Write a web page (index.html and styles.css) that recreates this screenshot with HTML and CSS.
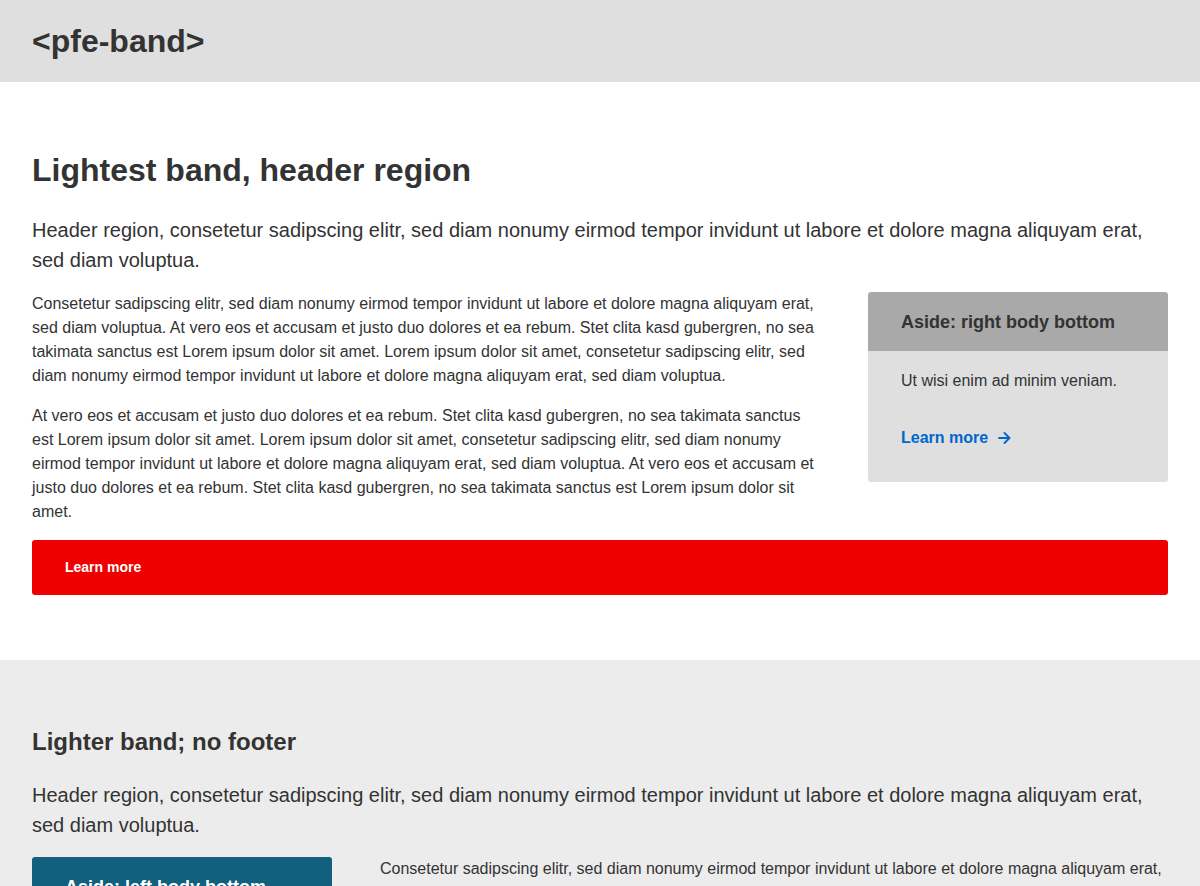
FILE: index.html
```html
<!DOCTYPE html>
<html lang="en">
<head>
<meta charset="utf-8">
<title>pfe-band</title>
<link rel="stylesheet" href="styles.css">
</head>
<body>
<header class="page-header">
  <h1 class="page-title">&lt;pfe-band&gt;</h1>
</header>

<section class="band band-lightest">
  <div class="band-header">
    <h2 class="band-title">Lightest band, header region</h2>
    <p class="band-lead">Header region, consetetur sadipscing elitr, sed diam nonumy eirmod tempor invidunt ut labore et dolore magna aliquyam erat, sed diam voluptua.</p>
  </div>
  <div class="band-content aside-right">
    <div class="band-body">
      <p>Consetetur sadipscing elitr, sed diam nonumy eirmod tempor invidunt ut labore et dolore magna aliquyam erat, sed diam voluptua. At vero eos et accusam et justo duo dolores et ea rebum. Stet clita kasd gubergren, no sea takimata sanctus est Lorem ipsum dolor sit amet. Lorem ipsum dolor sit amet, consetetur sadipscing elitr, sed diam nonumy eirmod tempor invidunt ut labore et dolore magna aliquyam erat, sed diam voluptua.</p>
      <p>At vero eos et accusam et justo duo dolores et ea rebum. Stet clita kasd gubergren, no sea takimata sanctus est Lorem ipsum dolor sit amet. Lorem ipsum dolor sit amet, consetetur sadipscing elitr, sed diam nonumy eirmod tempor invidunt ut labore et dolore magna aliquyam erat, sed diam voluptua. At vero eos et accusam et justo duo dolores et ea rebum. Stet clita kasd gubergren, no sea takimata sanctus est Lorem ipsum dolor sit amet.</p>
    </div>
    <aside class="card card-light">
      <h3 class="card-title">Aside: right body bottom</h3>
      <div class="card-body">
        <p>Ut wisi enim ad minim veniam.</p>
        <a class="cta-link" href="#">Learn more
          <svg class="cta-arrow" width="13" height="12" viewBox="0 0 13 12" aria-hidden="true"><path d="M1 6h10.5M6.5 1l5 5-5 5" fill="none" stroke="#0066cc" stroke-width="1.8" stroke-linecap="round" stroke-linejoin="round"/></svg>
        </a>
      </div>
    </aside>
  </div>
  <div class="band-footer">
    <a class="cta-bar" href="#">Learn more</a>
  </div>
</section>

<section class="band band-lighter">
  <div class="band-header">
    <h2 class="band-title small">Lighter band; no footer</h2>
    <p class="band-lead">Header region, consetetur sadipscing elitr, sed diam nonumy eirmod tempor invidunt ut labore et dolore magna aliquyam erat, sed diam voluptua.</p>
  </div>
  <div class="band-content aside-left">
    <aside class="card card-dark">
      <h3 class="card-title">Aside: left body bottom</h3>
      <div class="card-body">
        <p>Ut wisi enim ad minim veniam.</p>
      </div>
    </aside>
    <div class="band-body">
      <p>Consetetur sadipscing elitr, sed diam nonumy eirmod tempor invidunt ut labore et dolore magna aliquyam erat, sed diam voluptua. At vero eos et accusam et justo duo dolores et ea rebum. Stet clita kasd gubergren, no sea takimata sanctus est Lorem ipsum dolor sit amet.</p>
    </div>
  </div>
</section>
</body>
</html>
```

FILE: styles.css
```css
html, body {
  margin: 0;
  padding: 0;
}
body {
  font-family: "Liberation Sans", Arial, Helvetica, sans-serif;
  color: #333333;
  font-size: 16px;
  line-height: 1.5;
  background: #ffffff;
}
p { margin: 0; }

.page-header {
  background: #dfdfdf;
  height: 82px;
  box-sizing: border-box;
  padding: 22px 32px;
}
.page-title {
  margin: 0;
  font-size: 32px;
  line-height: 38px;
  font-weight: bold;
}

.band {
  padding: 64px 32px;
}
.band-lightest {
  background: #ffffff;
  padding-bottom: 65px;
}
.band-lighter { background: #ececec; }

.band-title {
  margin: 0;
  font-size: 32px;
  line-height: 48px;
  font-weight: bold;
}
.band-title.small {
  font-size: 24px;
  line-height: 36px;
}
.band-lead {
  margin-top: 21px;
  font-size: 20px;
  line-height: 30px;
}
.band-lighter .band-lead {
  margin-top: 20px;
}

.band-content {
  display: flex;
  gap: 48px;
  margin-top: 17px;
  align-items: flex-start;
}
.band-body {
  flex: 1;
  display: flex;
  flex-direction: column;
  gap: 16px;
}

.card {
  width: 300px;
  flex: none;
  border-radius: 3px;
  overflow: hidden;
}
.card-title {
  margin: 0;
  padding: 17px 32px 15px 33px;
  font-size: 18px;
  line-height: 27px;
  font-weight: bold;
}
.card-body {
  padding: 18px 32px 32px 33px;
}
.card-light .card-title { background: #a9a9a9; color: #333333; }
.card-light .card-body { background: #dfdfdf; }
.card-dark .card-title { background: #10607e; color: #ffffff; }
.card-dark .card-body { background: #10607e; color: #ffffff; }

.cta-link {
  display: inline-flex;
  align-items: center;
  gap: 10px;
  margin-top: 33px;
  color: #0066cc;
  font-weight: bold;
  text-decoration: none;
}
.cta-arrow { display: block; }

.band-footer {
  margin-top: 16px;
}
.cta-bar {
  display: block;
  background: #ee0000;
  color: #ffffff;
  border-radius: 3px;
  padding: 17px 33px;
  font-size: 14px;
  line-height: 21px;
  font-weight: bold;
  text-decoration: none;
}
```
